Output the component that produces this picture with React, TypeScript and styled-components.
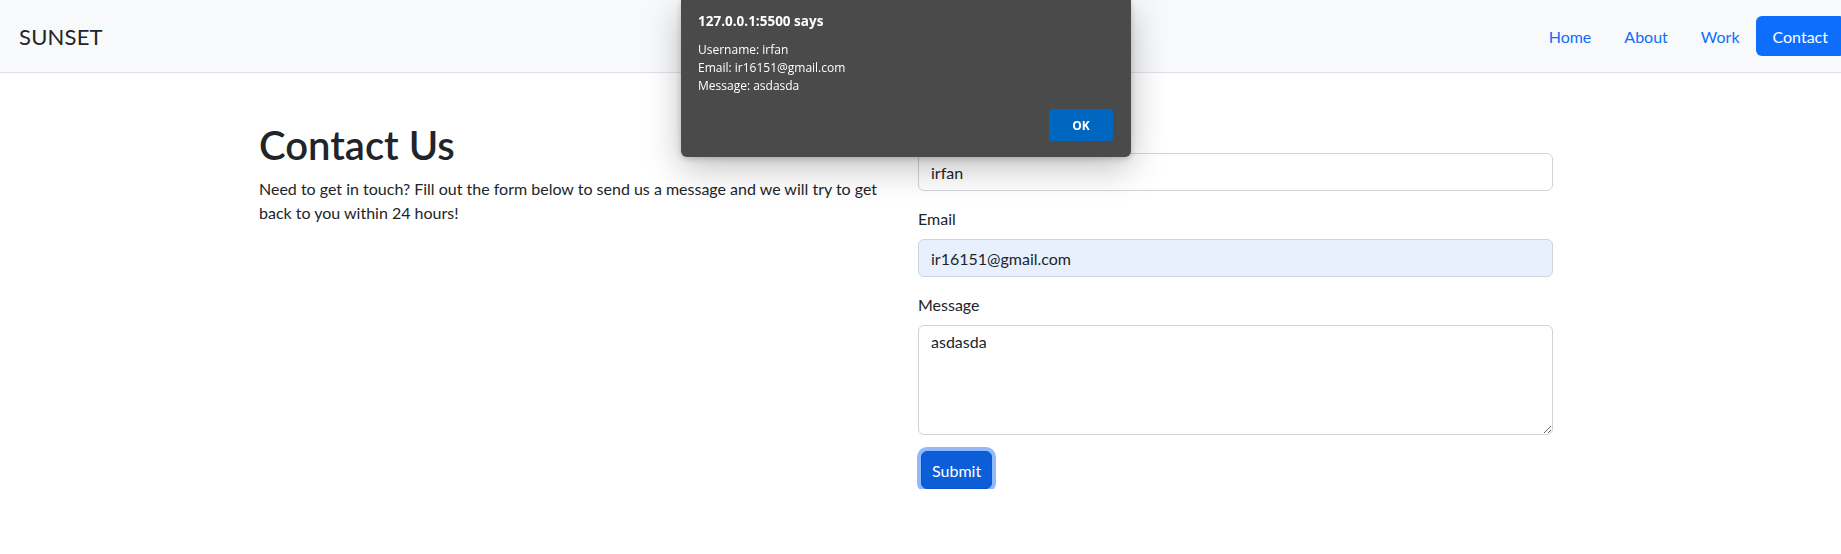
import styled, { createGlobalStyle } from "styled-components";

const GlobalStyle = createGlobalStyle`
  html, body {
    margin: 0;
    padding: 0;
    background: #ffffff;
    overflow: hidden;
  }
  body {
    font-family: Lato, "Noto Sans", sans-serif;
    color: #212529;
  }
  * {
    box-sizing: border-box;
  }
`;

const links = ["Home", "About", "Work"];

export default function App() {
  return (
    <>
      <GlobalStyle />
      <Navbar>
        <Brand>SUNSET</Brand>
        <NavList>
          {links.map((l) => (
            <NavLink key={l}>{l}</NavLink>
          ))}
          <NavButton>Contact</NavButton>
        </NavList>
      </Navbar>
      <Main>
        <IntroColumn>
          <Heading>Contact Us</Heading>
          <Lead>
            Need to get in touch? Fill out the form below to send us a message
            and we will try to get back to you within 24 hours!
          </Lead>
        </IntroColumn>
        <Form onSubmit={(e) => e.preventDefault()}>
          <Field>
            <Label>Username</Label>
            <Input defaultValue="irfan" />
          </Field>
          <Field>
            <Label>Email</Label>
            <Input $autofill defaultValue="ir16151@gmail.com" />
          </Field>
          <Field>
            <Label>Message</Label>
            <TextArea defaultValue="asdasda" />
          </Field>
          <SubmitButton type="submit">Submit</SubmitButton>
        </Form>
      </Main>
      <AlertBox>
        <AlertTitle>127.0.0.1:5500 says</AlertTitle>
        <AlertBody>
          <div>Username: irfan</div>
          <div>Email: ir16151@gmail.com</div>
          <div>Message: asdasda</div>
        </AlertBody>
        <AlertActions>
          <OkButton>OK</OkButton>
        </AlertActions>
      </AlertBox>
    </>
  );
}

const Navbar = styled.nav`
  height: 73px;
  background: #f8f9fa;
  border-bottom: 1px solid #dee2e6;
  display: flex;
  align-items: center;
  justify-content: space-between;
  padding-left: 19px;
`;

const Brand = styled.a`
  font-size: 22px;
  color: #212529;
  letter-spacing: 0.2px;
`;

const NavList = styled.div`
  display: flex;
  align-items: center;
  margin-right: -4px;
`;

const NavLink = styled.a`
  font-size: 16px;
  color: #0d6efd;
  padding: 8px 16px;
  margin-left: 1px;
`;

const NavButton = styled.a`
  font-size: 16px;
  color: #ffffff;
  background: #0d6efd;
  border-radius: 6px;
  height: 40px;
  padding: 0 17px;
  display: flex;
  align-items: center;
`;

const Main = styled.main`
  display: flex;
  padding: 48px 0 0 259px;
`;

const IntroColumn = styled.section`
  width: 659px;
  padding-right: 24px;
`;

const Heading = styled.h1`
  font-size: 40px;
  font-weight: 600;
  line-height: 48px;
  margin: 0 0 8px;
`;

const Lead = styled.p`
  font-size: 16px;
  line-height: 24px;
  margin: 0;
`;

const Form = styled.form`
  width: 635px;
  display: flex;
  flex-direction: column;
`;

const Field = styled.div`
  display: flex;
  flex-direction: column;
  margin-bottom: 16px;
`;

const Label = styled.label`
  font-size: 16px;
  line-height: 24px;
  margin-bottom: 8px;
`;

const Input = styled.input<{ $autofill?: boolean }>`
  height: 38px;
  font: inherit;
  font-size: 16px;
  color: #212529;
  padding: 6px 12px;
  border: 1px solid #ced4da;
  border-radius: 6px;
  background: ${(p) => (p.$autofill ? "#e8f0fe" : "#ffffff")};
  outline: none;
`;

const TextArea = styled.textarea`
  height: 110px;
  font: inherit;
  font-size: 16px;
  color: #212529;
  padding: 6px 12px;
  border: 1px solid #ced4da;
  border-radius: 6px;
  resize: vertical;
  outline: none;
`;

const SubmitButton = styled.button`
  align-self: flex-start;
  margin-left: 3px;
  font: inherit;
  font-size: 16px;
  color: #ffffff;
  background: #0b5ed7;
  border: 1px solid #0a58ca;
  border-radius: 6px;
  height: 38px;
  padding: 0 10px;
  box-shadow: 0 0 0 4px #91b9fb;
`;

const AlertBox = styled.div`
  position: fixed;
  top: 0;
  left: 681px;
  width: 450px;
  height: 157px;
  background: #4a4a4a;
  border-radius: 0 0 6px 6px;
  box-shadow: 0 10px 36px rgba(0, 0, 0, 0.26), 0 2px 6px rgba(0, 0, 0, 0.2);
  padding: 12px 17px 0 17px;
  color: #ffffff;
  font-family: "Open Sans", "Noto Sans", sans-serif;
  display: flex;
  flex-direction: column;
`;

const AlertTitle = styled.div`
  font-size: 13.5px;
  font-weight: 700;
  line-height: 18px;
`;

const AlertBody = styled.div`
  font-size: 12px;
  line-height: 18px;
  margin-top: 11px;
`;

const AlertActions = styled.div`
  display: flex;
  justify-content: flex-end;
  margin-top: 14px;
  padding-right: 1px;
`;

const OkButton = styled.button`
  width: 64px;
  height: 32px;
  border: none;
  border-radius: 3px;
  background: #0067c0;
  color: #ffffff;
  font-family: "Open Sans", "Noto Sans", sans-serif;
  font-size: 12px;
  font-weight: 700;
`;
